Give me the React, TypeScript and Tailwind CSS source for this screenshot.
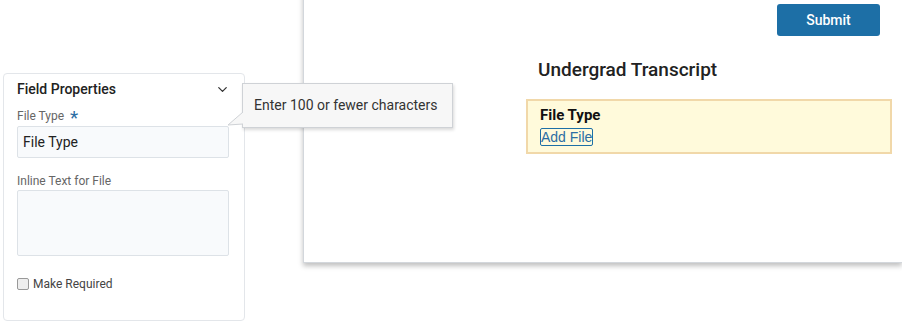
import { ChevronDown } from 'lucide-react';

export default function App() {
  return (
    <div className="relative w-[902px] h-[327px] overflow-hidden bg-white flex font-['Roboto',sans-serif]">
      {/* left properties panel */}
      <div className="w-[242px] h-[248px] ml-[3px] mt-[73px] border border-[#e3e6ea] rounded-[4px] px-[13px] pt-[6px] shrink-0">
        <div className="flex items-center justify-between h-[18px]">
          <span className="text-[14px] font-medium text-[#222]">Field Properties</span>
          <ChevronDown size={15} strokeWidth={2} className="text-[#333] mr-[1px]" />
        </div>
        <div className="mt-[10px] flex items-center h-[16px] text-[12px] text-[#666]">
          File Type
          <span className="ml-[6px] text-[19px] text-[#2c6ea4] leading-none mt-[2px]">*</span>
        </div>
        <div className="mt-[2px] h-[32px] w-[212px] border border-[#dde2e7] bg-[#f8fafc] rounded-[2px] flex items-center px-[5px] text-[14px] text-[#222]">
          File Type
        </div>
        <div className="mt-[14px] h-[16px] text-[12px] text-[#666]">Inline Text for File</div>
        <div className="mt-[2px] h-[66px] w-[212px] border border-[#dde2e7] bg-[#f8fafc] rounded-[2px]" />
        <div className="mt-[19px] flex items-center gap-[4px] text-[12px] text-[#444]">
          <span className="w-[12px] h-[12px] border border-[#999] rounded-[2px] bg-[#eee]" />
          Make Required
        </div>
      </div>

      {/* form page */}
      <div className="ml-[58px] mt-[-10px] h-[273px] flex-1 bg-white border-l border-b border-[#d3d7dc] shadow-[0_3px_5px_rgba(0,0,0,0.25)] flex flex-col">
        <div className="flex justify-end pr-[22px] pt-[14px]">
          <button className="w-[103px] h-[32px] bg-[#1d6fa6] rounded-[3px] text-white text-[14px] font-medium">
            Submit
          </button>
        </div>
        <div className="ml-[234px] mt-[23px] text-[19px] font-medium text-[#222] leading-[22px]">
          Undergrad Transcript
        </div>
        <div className="ml-[222px] mr-[10px] mt-[18px] h-[55px] bg-[#fffadb] border-2 border-[#f1d8a9] pl-[12px] pt-[4px]">
          <div className="text-[15px] font-bold text-[#111] leading-[20px]">File Type</div>
          <span className="inline-block mt-[2px] border border-[#1d6fa6] rounded-[2px] text-[14px] text-[#2c6ea4] leading-[16px] font-['Liberation_Sans',sans-serif]">
            Add File
          </span>
        </div>
      </div>

      {/* tooltip */}
      <div className="absolute left-[242px] top-[83px] w-[211px] h-[45px] bg-[#f7f7f7] border border-[#cfd2d6] shadow-[1px_2px_3px_rgba(0,0,0,0.15)] flex items-center pl-[11px] text-[14px] text-[#333]">
        Enter 100 or fewer characters
      </div>
      <svg className="absolute left-[227px] top-[111px]" width="17" height="16" viewBox="0 0 17 16">
        <polygon points="16,1 1,14 16,13" fill="#f7f7f7" />
        <polyline points="16,1 1,14 16,13" fill="none" stroke="#cfd2d6" strokeWidth="1" />
      </svg>
    </div>
  );
}
